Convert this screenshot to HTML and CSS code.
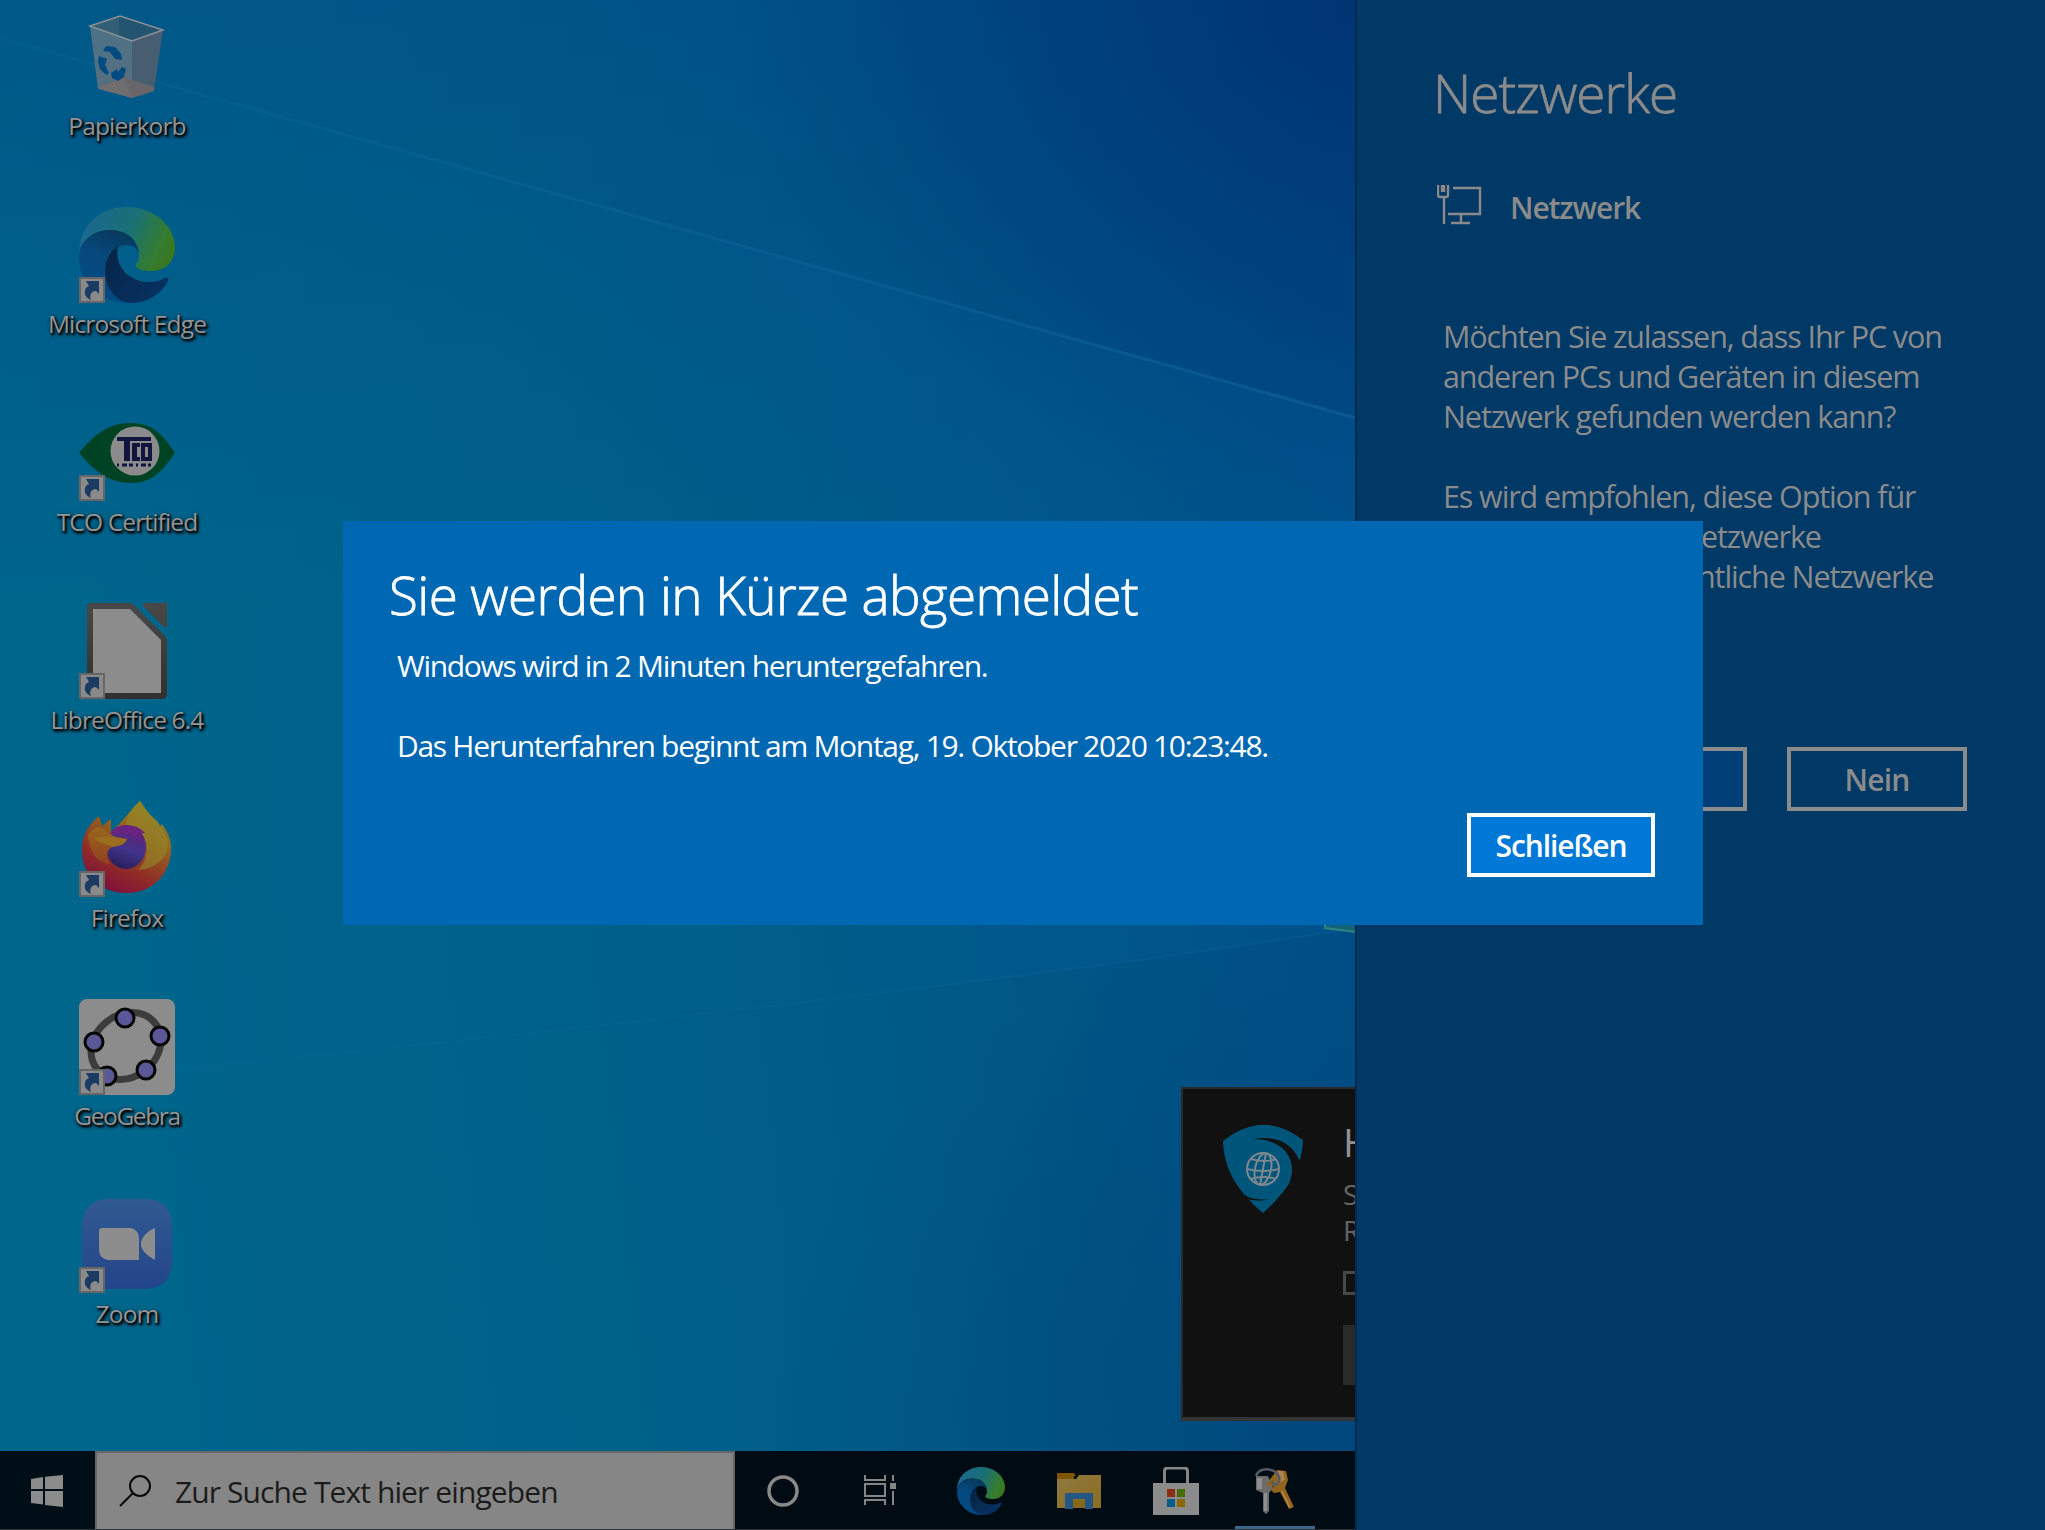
FILE: index.html
```html
<!DOCTYPE html>
<html lang="de">
<head>
<meta charset="utf-8">
<title>Desktop</title>
<link rel="stylesheet" href="styles.css">
</head>
<body>
<svg class="defs" aria-hidden="true">
  <defs>
    <linearGradient id="eTop" x1="0" y1=".3" x2="1" y2=".6"><stop offset="0" stop-color="#1b6793"/><stop offset=".5" stop-color="#1a7075"/><stop offset=".85" stop-color="#347c31"/><stop offset="1" stop-color="#39781f"/></linearGradient>
    <linearGradient id="eMid" x1=".6" y1="0" x2=".3" y2="1"><stop offset="0" stop-color="#07385d"/><stop offset=".4" stop-color="#07497f"/><stop offset="1" stop-color="#004a82"/></linearGradient>
    <linearGradient id="eLow" x1="0" y1="0" x2="1" y2="1"><stop offset="0" stop-color="#052344"/><stop offset="1" stop-color="#083466"/></linearGradient>
    <symbol id="edge" viewBox="0 0 96 96">
      <path fill="url(#eTop)" d="M0 45C1 17 22 0 48 0c28 0 48 20 48 40 0 15-10 24-23 24-12 0-18-3-16-7 3-3 3-6 3-10C59 32 47 23 30 23 15 23 4 32 0 45z"/>
      <path fill="url(#eMid)" d="M0 48C2 33 15 23 31 23c16 0 27 9 29 23-4-8-9-8-14-8-9 1-18 10-18 24 0 16 11 29 27 34C24 99-1 76 0 48z"/>
      <path fill="url(#eLow)" d="M39 39c-10 7-13 17-13 25 0 17 11 32 28 32 16-1 28-9 35-22 1-2 0-4-3-3-5 3-10 4-17 4-21-1-34-17-30-36z"/>
    </symbol>
    <symbol id="link" viewBox="0 0 26 26">
      <path fill="#666" d="M0 0h26v26H0z"/><path fill="#8a8a8a" d="M2 2h22v22H2z"/>
      <path fill="#1c3b63" d="M7 4h13v13l-3-3c-5 0-7 5-5 9-5-2-7-6-6-9 0-3 2-4 4-5z"/>
    </symbol>
    <linearGradient id="ffA" x1=".8" y1="0" x2=".3" y2="1"><stop offset="0" stop-color="#948a25"/><stop offset=".35" stop-color="#94651f"/><stop offset=".7" stop-color="#912d26"/><stop offset="1" stop-color="#7e0d3c"/></linearGradient>
    <linearGradient id="ffB" x1=".7" y1="0" x2=".4" y2="1"><stop offset="0" stop-color="#651f78"/><stop offset=".55" stop-color="#41348a"/><stop offset="1" stop-color="#281e5c"/></linearGradient>
    <linearGradient id="ffC" x1="0" y1="0" x2="0" y2="1"><stop offset="0" stop-color="#98661a"/><stop offset="1" stop-color="#90401f"/></linearGradient>
    <linearGradient id="zm" x1="0" y1="0" x2="0" y2="1"><stop offset="0" stop-color="#325a91"/><stop offset="1" stop-color="#23458a"/></linearGradient>
    <linearGradient id="lo" x1="0" y1="0" x2="0" y2="1"><stop offset="0" stop-color="#484848"/><stop offset="1" stop-color="#303030"/></linearGradient>
    <linearGradient id="folder" x1="0" y1="0" x2="1" y2="1"><stop offset="0" stop-color="#907a41"/><stop offset="1" stop-color="#8b6d20"/></linearGradient>
    <linearGradient id="bin" x1="0" y1="0" x2="0" y2="1"><stop offset="0" stop-color="#4d7186"/><stop offset="1" stop-color="#576f7f"/></linearGradient>
  </defs>
</svg>

<div class="screen">
  <main class="desktop">
    <svg class="wallpaper" viewBox="0 0 1356 1451" preserveAspectRatio="none" aria-hidden="true">
      <defs>
        <linearGradient id="ray" x1="0" y1="0" x2="1" y2="0"><stop offset="0" stop-color="#0f6b98" stop-opacity=".2"/><stop offset="1" stop-color="#0f5f98" stop-opacity=".7"/></linearGradient>
        <linearGradient id="fan" x1="0" y1="0" x2="1" y2="0"><stop offset="0" stop-color="#00628e" stop-opacity="0"/><stop offset="1" stop-color="#005c9c" stop-opacity=".25"/></linearGradient>
      </defs>
      <path fill="url(#fan)" d="M0 38C300 120 700 235 1356 418V928C1000 985 400 1050 0 1085z"/>
      <path fill="none" stroke="url(#ray)" stroke-width="3" d="M0 38C300 120 700 235 1356 418"/>
      <path fill="none" stroke="url(#ray)" stroke-width="2" opacity=".5" d="M0 1085C400 1050 1000 985 1356 928"/>
      <path fill="#126377" d="M1324 920h32v13l-32-4z"/><path fill="none" stroke="#2c8582" stroke-width="2" d="M1325 921v7l31 4"/>
    </svg>
    <div class="icons">
      <div class="item">
        <svg class="glyph" viewBox="0 0 96 96">
          <path fill="#335f76" d="M11 17L41 7l43 14-31 11z"/><path fill="#235470" d="M40 7v23l13 2 31-11z"/>
          <path fill="url(#bin)" d="M11 17l42 15v57L19 80z"/><path fill="#475e70" d="M53 32l31-11-9 61-22 7z"/>
          <path fill="#716e70" d="M19 79l26-11 8 21z"/><path fill="#686668" d="M45 68l30 10v4l-22 7z"/>
          <path fill="none" stroke="#8a9195" stroke-width="1.5" d="M11 17L41 7l43 14-31 11z"/>
          <path fill="#024a82" d="M24 42l3-5 9 1 6 7 1 6-7-1-5-7zM20 47l8 3-2 6 4 8-3 2-6-6-2-7zM32 64l6-4 1 3 4-5 4 2-2 8-6 4-6-3z"/>
        </svg>
        <span class="label">Papierkorb</span>
      </div>
      <div class="item">
        <svg class="glyph" viewBox="0 0 96 96"><use href="#edge" width="96" height="96"/><use href="#link" y="70" width="26" height="26"/></svg>
        <span class="label">Microsoft Edge</span>
      </div>
      <div class="item">
        <svg class="glyph" viewBox="0 0 96 96">
          <path fill="#004324" d="M0 48C14 31 28 18 52 18c22 0 32 12 44 30-12 17-22 30-44 30C28 78 14 64 0 48z"/>
          <circle cx="56" cy="46" r="24.5" fill="#8b8b8b"/>
          <path fill="#10143e" d="M38 32h34v4H38z"/><path fill="#10143e" d="M45 32h6v24h-6zM53 38h8v4h-3v10h3v4h-8zM62 38h11v18H62z"/><path fill="#8b8b8b" d="M66 42h3v10h-3z"/>
          <path stroke="#10143e" stroke-width="3" stroke-dasharray="2 3 5 2 4 3" d="M38 60h34"/>
          <use href="#link" y="70" width="26" height="26"/>
        </svg>
        <span class="label">TCO Certified</span>
      </div>
      <div class="item">
        <svg class="glyph" viewBox="0 0 96 96">
          <path fill="url(#lo)" d="M12 0h37q4 0 7 3l29 29q3 3 3 6v53q0 5-5 5H13q-5 0-5-5V5q0-5 4-5zM64 0h24v24q-2 1-4-1L65 4z"/>
          <path fill="#8c8c8c" d="M14 6h37l31 31v53H14z"/>
          <use href="#link" y="70" width="26" height="26"/>
        </svg>
        <span class="label">LibreOffice 6.4</span>
      </div>
      <div class="item">
        <svg class="glyph" viewBox="0 0 96 96">
          <path fill="url(#ffA)" d="M61 0c5 7 9 14 17 20l3 6 2-3c7 10 10 18 9 28-2 24-20 41-44 41C21 92 3 74 3 49 3 35 9 24 20 15l3 10 9-7v14z"/>
          <path fill="#938428" d="M61 0c-9 7-14 14-14 27 12 1 18 7 20 15 3 14-3 22-8 27 14-1 25-8 29-19 3-10-1-18-10-30C70 14 66 7 61 0z" opacity=".65"/>
          <ellipse cx="47" cy="46" rx="20" ry="22" fill="url(#ffB)"/>
          <path fill="#6b2381" d="M33 29c12-8 26-5 33 3l-9 1c4 3 6 6 7 10-8-10-18-13-28-9z"/>
          <path fill="url(#ffC)" d="M9 34c7-10 13-9 20-2 2 0 3 1 4 2 4 3 9 3 15 4-2 6-9 7-15 8-6 3-6 10-2 17-13-1-20-11-22-29z"/>
          <path fill="#9b6e1f" d="M15 37c9-3 22-1 33 1-2 6-9 7-15 8-2-3-13-3-18-9z"/>
          <use href="#link" y="70" width="26" height="26"/>
        </svg>
        <span class="label">Firefox</span>
      </div>
      <div class="item">
        <svg class="glyph" viewBox="0 0 96 96">
          <rect width="96" height="96" rx="8" fill="#8c8c8c"/>
          <ellipse cx="47" cy="47" rx="37" ry="31" fill="none" stroke="#3c3c3c" stroke-width="7" transform="rotate(-38 47 47)"/>
          <g fill="#5b5897" stroke="#050505" stroke-width="3"><circle cx="46" cy="19" r="9"/><circle cx="81" cy="37" r="9"/><circle cx="67" cy="71" r="9"/><circle cx="28" cy="77" r="9"/><circle cx="15" cy="43" r="9"/></g>
          <use href="#link" y="70" width="26" height="26"/>
        </svg>
        <span class="label tight">GeoGebra</span>
      </div>
      <div class="item">
        <svg class="glyph" viewBox="0 0 96 96">
          <path fill="url(#zm)" d="M30 2h36c20 0 27 13 27 27v35c0 20-12 28-28 28H31C13 92 3 82 3 64V30C3 12 13 2 30 2z"/>
          <path fill="#8d8d8d" d="M23 31h29q8 2 8 11v21H29q-9-2-9-10V34q0-3 3-3zM76 31v32c-9-5-14-10-14-16s5-12 14-16z"/>
          <use href="#link" y="70" width="26" height="26"/>
        </svg>
        <span class="label">Zoom</span>
      </div>
    </div>
  </main>

  <footer class="taskbar">
    <div class="start"><svg width="32" height="32" viewBox="0 0 32 32"><path fill="#8c8c8c" d="M0 4l12-2v12H0zM14 1.700L32 0v14H14zM0 16h12v13.500L0 28zM14 16h18v16l-18-2z"/></svg></div>
    <div class="search">
      <svg width="32" height="32" viewBox="0 0 32 32" fill="none" stroke="#080808" stroke-width="2"><circle cx="21" cy="11" r="10"/><path d="M14 18L1 31"/></svg>
      <span>Zur Suche Text hier eingeben</span>
    </div>
    <div class="apps">
      <div class="app"><svg width="32" height="32" viewBox="0 0 32 32"><circle cx="16" cy="16" r="14" fill="none" stroke="#898989" stroke-width="3.500"/></svg></div>
      <div class="app"><svg width="32" height="32" viewBox="0 0 32 32"><path fill="none" stroke="#858585" stroke-width="2" d="M1 0v5h20V0M1 9h20v12H1zM1 30v-5h20v5M29 0v6M29 16v14"/><path fill="#858585" d="M26 8h6v6h-6z"/></svg></div>
      <div class="app"><svg width="48" height="48"><use href="#edge" width="48" height="48"/></svg></div>
      <div class="app"><svg width="48" height="48" viewBox="0 0 48 48"><path fill="#805500" d="M2 6h17l2 3h-2v4H2z"/><path fill="url(#folder)" d="M2 12h19l3-4h22v33H2z"/><path fill="#245783" d="M10 26h28v16h-8V32H18v10h-8z"/><path fill="#846719" d="M18 33h12v8H18z"/></svg></div>
      <div class="app"><svg width="48" height="48" viewBox="0 0 48 48"><path fill="none" stroke="#858585" stroke-width="3" d="M12.500 17V4q0-3 3-3h17q3 0 3 3v13"/><path fill="#8c8c8c" d="M1 16h46v32H1z"/><path fill="#8d2e14" d="M15 22h8v8h-8z"/><path fill="#466c00" d="M25 22h8v8h-8z"/><path fill="#005e86" d="M15 32h8v8h-8z"/><path fill="#8b6700" d="M25 32h8v8h-8z"/></svg></div>
      <div class="app active"><svg width="48" height="48" viewBox="0 0 48 48" fill="none">
        <path fill="#6c6c6e" d="M5 9l12 0 5 12-4 5v18l-3 3-3-3V26l-7-3z"/><path fill="#8f8f8f" d="M6 11h5v11H6zM13 26h3v18h-3z"/>
        <path fill="#93641d" d="M17 15l9-12 9 1 2 9-3 8 9 19-5 2-9-17-6 1-3-3 3-4-4 1-4-2z"/><path fill="#a7874f" d="M27 4l5 0 2 9-5 2z"/><path stroke="#b48d4b" stroke-width="1.500" d="M31 24l8 17"/>
        <path stroke="#555969" stroke-width="2.500" d="M5 9C7 3 14 1 20 3c8 2 10 9 7 13-2 3-6 2-6-2"/>
      </svg></div>
    </div>
  </footer>

  <aside class="toast">
    <svg class="shield" width="80" height="88" viewBox="0 0 80 88">
      <path fill="#00557b" d="M0 16Q40-16 80 15C79 46 62 68 40 88 16 68 1 46 0 16z"/>
      <path fill="#111" d="M30 14c23-4 39 4 46 21l4-2-4 16-8 15C56 78 66 66 69 47 70 27 55 14 30 14zM46 74c-14 2-24-2-31-9l2 12 11 0-3-3c8 2 14 2 21 0z"/>
      <g fill="none" stroke="#7c8790" stroke-width="2"><circle cx="40" cy="44" r="16"/><ellipse cx="40" cy="44" rx="8" ry="16" transform="rotate(12 40 44)"/><path d="M24 44q15 4 32 0M43 28l-6 32M28 34q14 4 25 0M28 54q12-4 25 0"/></g>
    </svg>
    <div class="toast-body">
      <strong>H</strong>
      <p>S</p><p>R</p>
      <div class="field"></div>
      <div class="action"></div>
    </div>
  </aside>

  <aside class="panel">
    <h1>Netzwerke</h1>
    <div class="net">
      <svg width="46" height="42" viewBox="0 0 46 42" fill="none" stroke="#8a8a8a" stroke-width="2.4"><path d="M1 2v10q0 2 2 2h6q2 0 2-2V2M5 2v7M7 2v7M7 14v27M16 5h27v26H11M24 31v9M14 40h19"/></svg>
      <span>Netzwerk</span>
    </div>
    <p class="para">Möchten Sie zulassen, dass Ihr PC von<br>anderen PCs und Geräten in diesem<br>Netzwerk gefunden werden kann?</p>
    <p class="para">Es wird empfohlen, diese Option für<br><span class="tail-a">etzwerke</span><br><span class="tail-b">ntliche Netzwerke</span></p>
    <div class="choices"><div class="btn primary"></div><div class="btn">Nein</div></div>
  </aside>

  <section class="dialog">
    <h2>Sie werden in Kürze abgemeldet</h2>
    <p class="l1">Windows wird in 2 Minuten heruntergefahren.</p>
    <p class="l2">Das Herunterfahren beginnt am Montag, 19. Oktober 2020 10:23:48.</p>
    <button class="close">Schließen</button>
  </section>
</div>
</body>
</html>
```
FILE: styles.css
```css
* { box-sizing: border-box; }
body, h1, h2, p { margin: 0; }
body { font-family: "Open Sans", "Noto Sans", sans-serif; overflow: hidden; }
svg { display: block; flex: none; }
.defs { position: absolute; width: 0; height: 0; }

.screen {
  position: relative;
  display: flex;
  flex-direction: column;
  width: 2045px;
  height: 1530px;
  overflow: hidden;
  background: #003966;
}

.desktop {
  position: relative;
  width: 1356px;
  height: 1451px;
  background:
    radial-gradient(ellipse 620px 520px at 100% 0, rgba(0, 42, 106, .65), transparent),
    radial-gradient(ellipse 600px 560px at 100% 100%, rgba(0, 62, 116, .5), transparent),
    linear-gradient(180deg, rgba(0, 68, 132, .4) 0, rgba(0, 68, 132, 0) 42%),
    linear-gradient(84deg, #00668c 8%, #006189 42%, #005686 75%, #004b85 100%);
}
.wallpaper { position: absolute; inset: 0; width: 100%; height: 100%; }
.icons { position: relative; display: flex; flex-direction: column; width: 254px; padding-top: 9px; }
.item { display: flex; flex-direction: column; align-items: center; gap: 4px; height: 198px; }
.glyph { width: 96px; height: 96px; }
.label {
  font-size: 24.5px;
  line-height: 34px;
  letter-spacing: -.85px;
  white-space: nowrap;
  color: #949494;
  text-shadow: 2px 2px 3px #000, 1px 2px 2px rgba(0, 0, 0, .8), 0 1px 4px rgba(0, 0, 0, .6);
}
.tight { letter-spacing: -1.4px; }

.taskbar { display: flex; width: 1356px; height: 79px; background: #000b14; border-bottom: 1px solid #2a333a; }
.start { display: flex; align-items: center; width: 95px; padding: 2px 0 0 31px; background: #000e17; }
.search {
  display: flex;
  align-items: center;
  gap: 24px;
  width: 640px;
  padding-left: 22px;
  border: 2px solid #676767;
  border-bottom: 0;
  background: #868686;
  color: #1b1b1b;
  font-size: 30px;
  letter-spacing: -.9px;
  white-space: nowrap;
}
.apps { display: flex; }
.app { display: flex; align-items: center; justify-content: center; width: 98px; padding-top: 2px; }
.app:first-child { width: 96px; }
.app:nth-child(3) { width: 104px; }
.app:nth-child(4) { width: 92px; }
.app:nth-child(5) { width: 102px; }
.app:nth-child(6) { width: 80px; margin-left: 8px; }
.active { box-shadow: inset 0 -3px #3d6689; }

.toast {
  position: absolute;
  left: 1181px;
  top: 1087px;
  display: flex;
  gap: 40px;
  width: 174px;
  height: 334px;
  padding: 36px 0 0 40px;
  overflow: hidden;
  background: #111;
  border: 2px solid #2a2a2a;
  border-right: 0;
  border-bottom: 4px solid #343434;
}
.toast-body { flex: none; width: 300px; color: #646464; }
.toast-body strong { display: block; margin-top: -8px; color: #919191; font-size: 39px; font-weight: 400; line-height: 50px; }
.toast-body p { font-size: 28px; line-height: 36px; }
.toast-body p:first-of-type { margin-top: 9px; }
.field { height: 24px; margin-top: 23px; border: 3px solid #484848; }
.action { height: 60px; margin-top: 30px; background: #2a2a2a; }

.panel {
  position: absolute;
  left: 1355px;
  top: 0;
  width: 690px;
  height: 1530px;
  padding: 58px 78px 0 80px;
  border-left: 2px solid #002b50;
  background: #003966;
  color: #8b8b8b;
}
.panel h1 { margin-left: -4px; font-size: 53px; font-weight: 300; line-height: 70px; letter-spacing: -.9px; -webkit-text-stroke: .8px; }
.net { display: flex; align-items: flex-start; gap: 27px; margin-top: 55px; height: 133px; font-size: 30px; font-weight: 600; line-height: 40px; }
.net span { padding-top: 5px; letter-spacing: -1.1px; }
.para { padding-left: 6px; margin-bottom: 40px; font-size: 30.5px; line-height: 40px; letter-spacing: -1.1px; white-space: nowrap; }
.tail-a { margin-left: 258px; }
.tail-b { margin-left: 254px; }
.choices { display: flex; gap: 40px; justify-content: flex-end; margin-top: 151px; }
.btn { width: 180px; height: 64px; border: 4px solid #8b8b8b; text-align: center; font-size: 30px; font-weight: 600; line-height: 58px; letter-spacing: -.8px; }
.primary { background: #003f77; }

.dialog {
  position: absolute;
  left: 343px;
  top: 521px;
  display: flex;
  flex-direction: column;
  width: 1360px;
  height: 404px;
  padding: 39px 48px 48px 46px;
  background: #0067b3;
  color: #fff;
  white-space: nowrap;
}
.dialog h2 { margin-bottom: 16px; font-size: 53px; font-weight: 300; line-height: 70px; letter-spacing: -.6px; -webkit-text-stroke: .8px; }
.dialog p { padding-left: 8px; margin-bottom: 40px; font-size: 30px; line-height: 40px; letter-spacing: -1.3px; }
.close {
  align-self: flex-end;
  width: 188px;
  height: 64px;
  margin-top: auto;
  padding: 0;
  border: 4px solid #fff;
  background: #0078d7;
  color: #fff;
  font: 600 30px/58px "Open Sans", sans-serif;
  letter-spacing: -1.1px;
}
```
